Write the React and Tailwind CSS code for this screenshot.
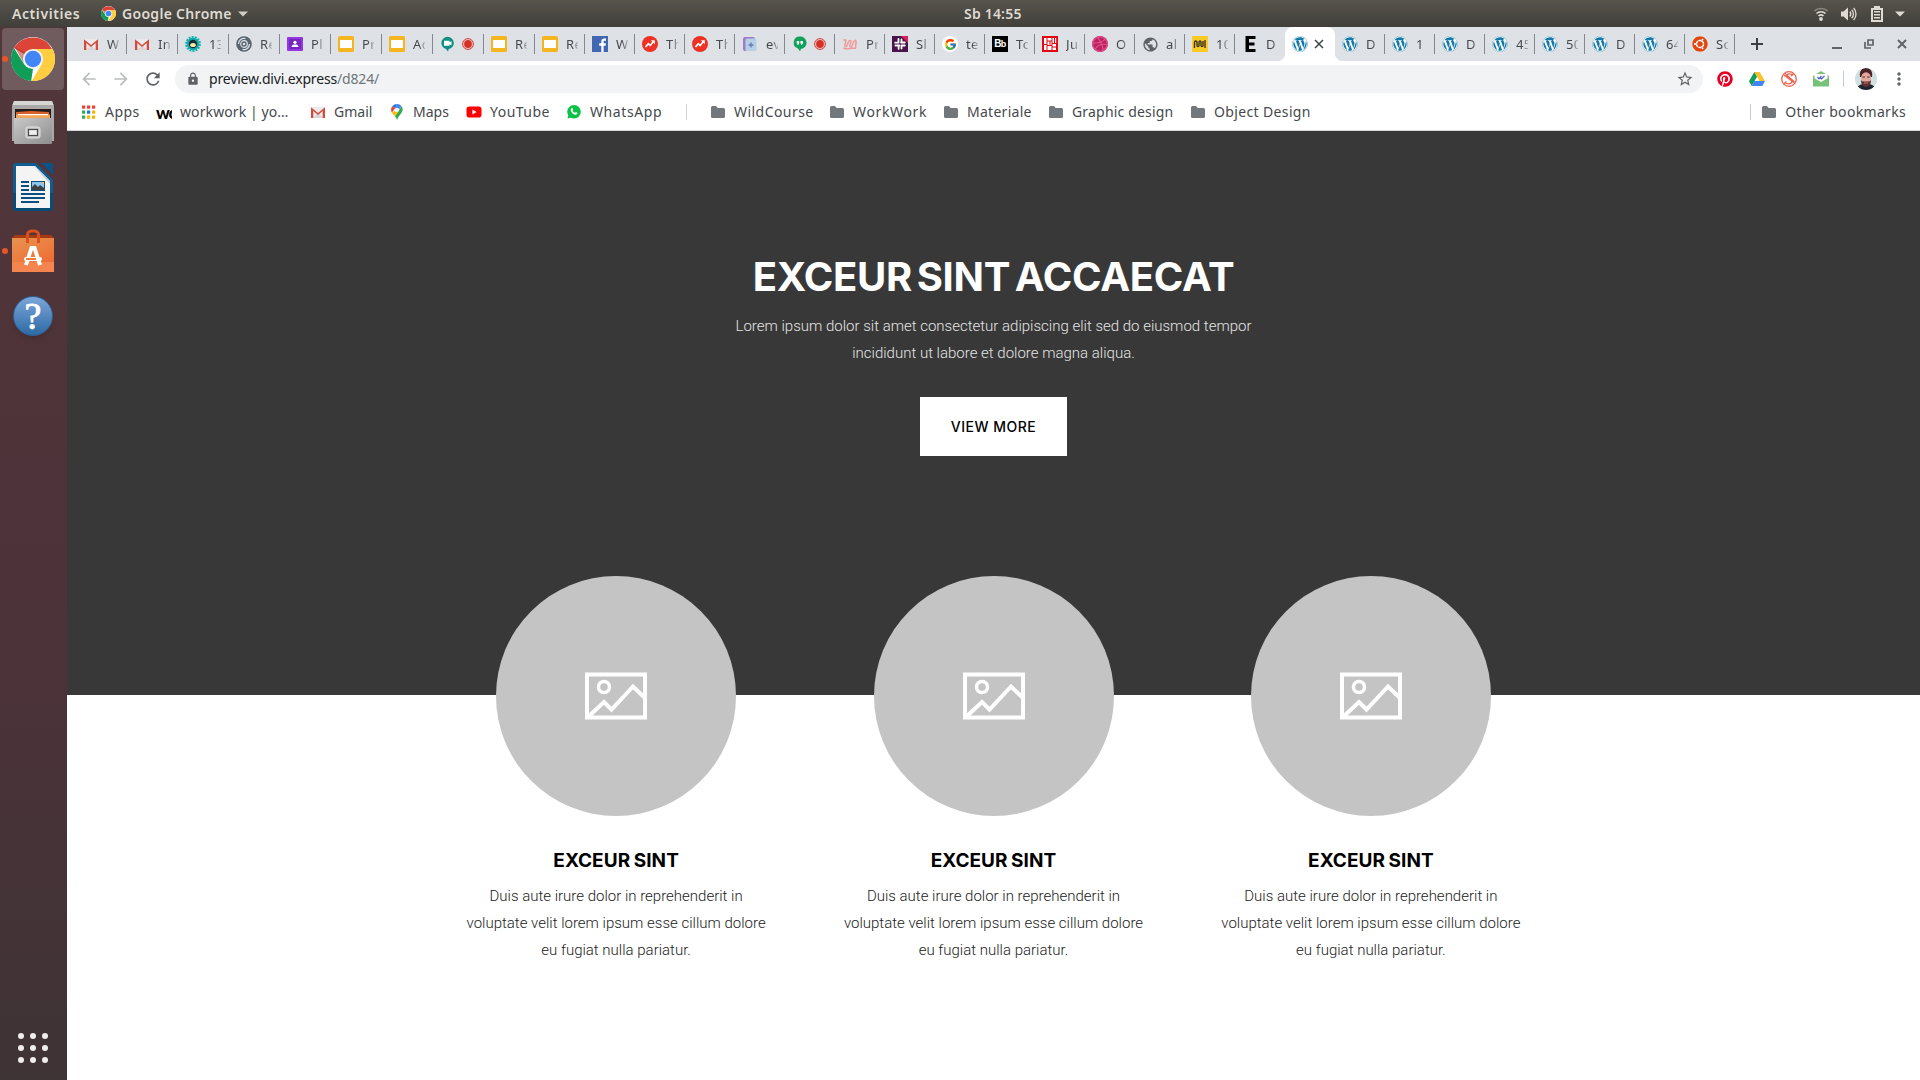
import React from "react";
import { FaWordpress, FaDribbble, FaPinterest, FaUbuntu } from "react-icons/fa";
import { FcGoogle } from "react-icons/fc";
import { MdArrowBack, MdArrowForward, MdRefresh, MdLock, MdStarBorder, MdMoreVert, MdPublic } from "react-icons/md";

const Svg = ({ size = 16, box = "0 0 16 16", className = "", children }) => (
  <svg width={size} height={size} viewBox={box} className={"block shrink-0 " + className}>{children}</svg>
);

const Chrome = ({ size }) => (
  <Svg size={size} box="0 0 48 48">
    <circle cx="24" cy="24" r="24" fill="#fff" />
    <path d="M24 24L3.2 12A24 24 0 0 1 44.8 13H24z" fill="#db4437" />
    <path d="M3.2 12L14.5 30 24 35 22 48A24 24 0 0 1 3.2 12z" fill="#109d58" />
    <path d="M24 13H45.3A24 24 0 0 1 22.5 48L34 29z" fill="#ffcd40" />
    <path d="M4 11L14 29 15 17z" fill="#b33226" opacity=".55" />
    <circle cx="24" cy="24" r="11" fill="#f1f1f1" />
    <circle cx="24" cy="24" r="8.9" fill="#4285f4" />
  </Svg>
);

const Gmail = () => (
  <Svg>
    <path d="M1 3h14v11H1z" fill="#eceaea" />
    <path d="M3 14l5-5 5 5z" fill="#d8d6d6" />
    <path d="M1 14V3.200L8 9l7-5.800V14h-2.300V7L8 10.900 3.300 7v7z" fill="#d54b3d" />
  </Svg>
);
const Gear = () => (
  <Svg>
    <circle cx="8" cy="8" r="6.800" fill="none" stroke="#17b3b3" strokeWidth="2.200" strokeDasharray="2 1.050" />
    <circle cx="8" cy="8" r="6.200" fill="#14a9ab" />
    <circle cx="8" cy="8" r="4.200" fill="#1d2b35" />
    <path d="M5 9.500a3 2.500 0 0 1 6 0l-1.500 1.500h-3z" fill="#f4e9a8" />
  </Svg>
);
const Swirl = () => (
  <Svg>
    <circle cx="8" cy="8" r="7.800" fill="#55646e" />
    <path d="M2.500 8a5.500 5.500 0 0 1 7-5.300M13.500 8a5.500 5.500 0 0 1-7 5.300" fill="none" stroke="#dee1e6" strokeWidth="1.300" />
    <circle cx="8" cy="8" r="3.300" fill="none" stroke="#dee1e6" strokeWidth="1.200" />
    <circle cx="8" cy="8" r="1.300" fill="#dee1e6" />
  </Svg>
);
const Classroom = () => (
  <Svg>
    <rect y="1" width="16" height="14" rx="1" fill="#9334e6" />
    <rect x="2" y="3" width="12" height="10" fill="#7627bb" />
    <circle cx="8" cy="6.300" r="1.600" fill="#fff" />
    <path d="M4.500 11c0-2 2-2.500 3.500-2.500s3.500.5 3.500 2.500z" fill="#fff" />
  </Svg>
);
const Slides = () => (
  <Svg>
    <rect width="16" height="16" rx="1.500" fill="#f5b51e" />
    <rect x="2" y="4" width="12" height="8" fill="#fff" />
  </Svg>
);
const Meet = () => (
  <Svg>
    <path d="M7.500.8a6.200 6.200 0 0 1 1.200 12.300L8 15.500 6 13A6.200 6.200 0 0 1 7.500.8z" fill="#0b8f80" />
    <path d="M4 4.800h5.500v1.400L11.500 5v4.500L9.500 8.300v1.500H4z" fill="#fff" />
  </Svg>
);
const Hangouts = () => (
  <Svg>
    <path d="M7.800.5a6.200 6.200 0 0 1 1.100 12.400L8 15.300 6 12.600A6.200 6.200 0 0 1 7.800.5z" fill="#12a05c" />
    <path d="M4.700 5h2.500v2.300L6.200 9H5.300l.5-1.500H4.700zM8.400 5h2.500v2.300L9.900 9H9l.5-1.500H8.400z" fill="#fff" />
  </Svg>
);
const Facebook = () => (
  <Svg>
    <rect width="16" height="16" fill="#4267b2" />
    <path d="M9.300 16V9.700H7.200V7.300h2.100V5.600c0-2 1.200-3.100 3-3.100.8 0 1.400.1 1.700.1v2.100h-1.200c-1 0-1.200.5-1.200 1.200v1.400h2.300l-.3 2.400h-2V16z" fill="#fff" />
  </Svg>
);
const Trend = () => (
  <Svg>
    <circle cx="8" cy="8" r="8" fill="#ee3124" />
    <path d="M3.500 11l2.800-3.300 1.800 1.800L11.500 5.500" fill="none" stroke="#fff" strokeWidth="1.700" />
    <path d="M8.800 4.300h4v4z" fill="#fff" />
  </Svg>
);
const Cube = () => (
  <Svg>
    <rect x="1" y="1" width="12" height="14" rx="2" fill="#9d7cc4" />
    <rect x="3.500" y="2.500" width="11" height="12.500" rx="1.500" fill="#b5cfe6" />
    <path d="M9 6.500v5M6.500 9h5" stroke="#6f74b5" strokeWidth="1.300" />
  </Svg>
);
const Squiggle = () => (
  <Svg>
    <path d="M1.500 4.500c2-2 3 0 2 2s-1 4 .5 4 1.500-4 3-5.500 2.500 0 1.500 2-1 4 .5 4S10.500 7 12 5.200s2.500-.5 2 1.500-.5 3-.3 5M1.500 12c3 1.500 5 .8 7 .3s3 .5 5.500-.3" fill="none" stroke="#f09a98" strokeWidth="1.500" />
  </Svg>
);
const Slack = () => (
  <Svg>
    <rect width="16" height="16" fill="#481449" />
    <path d="M9 0h7v7z" fill="#d81e5b" />
    <path d="M6.500 3v3.500M9.500 3.500v3M3.200 6.700h3.300M9 6.500h3.800M3.400 9.500h4M9.500 9.500h3.300M6.600 9.500v3.300M9.500 9.500v3" stroke="#fff" strokeWidth="1.800" strokeLinecap="round" />
  </Svg>
);
const Google = () => (
  <span className="flex size-4 shrink-0 items-center justify-center rounded-full bg-white"><FcGoogle size={13} /></span>
);
const Bb = () => (
  <span className="flex size-4 shrink-0 items-center justify-center bg-black font-['Liberation_Sans'] text-[10px] leading-none font-bold tracking-[-0.5px] text-white">B<span className="text-[9px]">b</span></span>
);
const RedGrid = () => (
  <Svg>
    <rect width="16" height="16" fill="#e30613" />
    <path d="M2 2h2.500v6H2zM5.500 2h4v2.500h-4zM5.500 5.500h2V9h-2zM8.500 5.500h1V9h-1zM10.500 2h1.500v5h-1.500zM13 2h1.200v5H13zM2 9h2.500v5H2zM5.500 10h4v4h-4zM10.500 8H14v2.500h-3.500zM10.500 11.500H14V14h-3.500z" fill="#fff" />
  </Svg>
);
const Dribbble = () => (
  <span className="flex size-4 shrink-0 items-center justify-center rounded-full bg-[#b52560]"><FaDribbble size={16} color="#ea4c89" /></span>
);
const Globe = () => <MdPublic size={17} color="#5f6368" className="shrink-0" />;
const Yellow = () => (
  <Svg>
    <rect width="16" height="16" fill="#fccb25" />
    <path d="M2.500 12V6.500c0-2 2.500-2 2.500 0v3c0 1.500 2 1.500 2 0v-3c0-2 2-2 2 0v3c0 1.500 2 1.500 2 0V5M13 4v8" fill="none" stroke="#3a3320" strokeWidth="1.400" />
  </Svg>
);
const BlackE = () => (
  <Svg><path d="M3.500 0h10v3H7v3.500h5.500v3H7V13h6.500v3h-10z" fill="#000" /></Svg>
);
const WP = () => (
  <span className="flex size-4 shrink-0 items-center justify-center rounded-full bg-white"><FaWordpress size={16} color="#1479a8" /></span>
);
const Ubuntu = () => (
  <span className="flex size-4 shrink-0 items-center justify-center rounded-full bg-white"><FaUbuntu size={16} color="#dd4814" /></span>
);

const tabs = [
  [Gmail, "W"], [Gmail, "In"], [Gear, "13"], [Swirl, "Re"], [Classroom, "Pl"], [Slides, "Pr"], [Slides, "Ac"], [Meet, null], [Slides, "Re"],
  [Slides, "Re"], [Facebook, "W"], [Trend, "Th"], [Trend, "Th"], [Cube, "ev"], [Hangouts, null], [Squiggle, "Pr"], [Slack, "Sl"], [Google, "te"], [Bb, "To"],
  [RedGrid, "Ju"], [Dribbble, "O"], [Globe, "al"], [Yellow, "10"], [BlackE, "D"], [WP, "active"], [WP, "D"], [WP, "1"], [WP, "D"], [WP, "45"], [WP, "50"], [WP, "D"], [WP, "64"], [Ubuntu, "So"],
];

function Tab({ icon: Icon, label, index }) {
  if (label === "active") {
    return (
      <div className="relative flex h-full w-[50px] items-center rounded-t-lg bg-white pl-[7px]">
        <span className="absolute bottom-0 -left-2 size-2 bg-[radial-gradient(circle_at_0_0,#dee1e6_8px,#fff_8.5px)]" />
        <span className="absolute -right-2 bottom-0 size-2 bg-[radial-gradient(circle_at_100%_0,#dee1e6_8px,#fff_8.5px)]" />
        <Icon />
        <Svg size={10} box="0 0 10 10" className="ml-[6px]"><path d="M1 1l8 8M9 1L1 9" stroke="#3c4043" strokeWidth="1.500" /></Svg>
      </div>
    );
  }
  return (
    <div className={"flex h-full items-center pl-[7px] " + (index < 9 ? "w-[51px]" : "w-[50px]")}>
      <span className="flex w-4 justify-center"><Icon /></span>
      {label ? (
        <span className="ml-2 w-[12px] overflow-hidden text-[13px] leading-5 tracking-[0.4px] whitespace-nowrap text-[#45494d] [mask-image:linear-gradient(90deg,#000_50%,rgba(0,0,0,.25)_100%)]">{label}</span>
      ) : (
        <Svg size={12} box="0 0 12 12" className="ml-[6px]"><circle cx="6" cy="6" r="5.400" fill="none" stroke="#d93025" strokeWidth="1" /><circle cx="6" cy="6" r="3.900" fill="#d93025" /></Svg>
      )}
      {index !== 23 && <span className="ml-auto h-5 w-px bg-[#85898e]" />}
    </div>
  );
}

const Folder = () => (
  <Svg><path d="M1 3.500a1.500 1.500 0 0 1 1.500-1.500H6l1.600 2H13.500A1.500 1.500 0 0 1 15 5.500v7a1.500 1.500 0 0 1-1.500 1.500h-11A1.500 1.500 0 0 1 1 12.500z" fill="#72777c" /></Svg>
);
const AppsGrid = () => (
  <Svg>
    {["#ea4335", "#ea4335", "#ea4335", "#34a853", "#1a73e8", "#f5b400", "#34a853", "#f5b400", "#f5b400"].map((c, i) => (
      <rect key={i} x={1 + (i % 3) * 5} y={1.5 + Math.floor(i / 3) * 5} width="3.200" height="3.200" fill={c} />
    ))}
  </Svg>
);
const WorkWork = () => (
  <span className="flex h-4 w-4 shrink-0 items-end overflow-hidden font-['Lato'] text-[17px] leading-[15px] font-black tracking-[-1px] text-black">wo</span>
);
const Maps = () => (
  <Svg>
    <path d="M8 0a5.800 5.800 0 0 0-4.500 2.100L6.200 4.400z" fill="#1a73e8" />
    <path d="M3.500 2.100A5.800 5.800 0 0 0 2.800 8.500L6.200 4.400z" fill="#ea4335" />
    <path d="M8 0a5.800 5.800 0 0 1 4.600 2.300L8 7.900 6.200 4.400z" fill="#4285f4" />
    <path d="M12.600 2.300c2 3 .8 5.500-.8 7.500S9 13.500 8 16C7.400 14.300 6.800 13.300 6 12.300z" fill="#34a853" />
    <path d="M2.800 8.500C3.500 9.800 5 11 6 12.300L9.700 7.300A2.200 2.200 0 0 1 6 7z" fill="#fbbc04" />
    <circle cx="8" cy="5.800" r="2.100" fill="#fff" />
  </Svg>
);
const YouTube = () => (
  <Svg><rect x=".5" y="2.500" width="15" height="11" rx="2.800" fill="#f00" /><path d="M6.400 5.600v4.800L10.600 8z" fill="#fff" /></Svg>
);
const Whats = () => (
  <Svg>
    <circle cx="8" cy="7.800" r="6.800" fill="#0ac245" /><path d="M1.500 14.500l1-4 3 3z" fill="#0ac245" />
    <path d="M5.300 4.300c.5-.6 1.200-.4 1.400.2l.4 1c.1.400-.6 1-.4 1.300.5.900 1.200 1.500 2.200 2 .4.200.8-.8 1.200-.6l1.200.6c.5.400 0 1.700-1.500 2-2 .2-5-2.600-5.100-4.500 0-.9.200-1.600.6-2z" fill="#fff" />
  </Svg>
);

const bookmarks = [
  [AppsGrid, "Apps", "w-[75px] tracking-[0.45px]"],
  [WorkWork, "workwork | yo…", "w-[154px] tracking-[0.1px]"],
  [Gmail, "Gmail", "w-[79px]"],
  [Maps, "Maps", "w-[77px]"],
  [YouTube, "YouTube", "w-[100px] tracking-[0.48px]"],
  [Whats, "WhatsApp", "w-[120px] tracking-[0.6px]"],
];
const folders = [
  ["WildCourse", "w-[119px] tracking-[0.45px]"],
  ["WorkWork", "w-[114px] tracking-[0.65px]"],
  ["Materiale", "w-[105px] tracking-[0.28px]"],
  ["Graphic design", "w-[142px] tracking-[0.18px]"],
  ["Object Design", "w-[130px] tracking-[0.36px]"],
];
const Bookmark = ({ icon: Icon, label, cls }) => (
  <div className={"flex items-center gap-2 whitespace-nowrap " + cls}><Icon />{label}</div>
);

function TopBar() {
  return (
    <header className="flex h-[27px] items-center bg-linear-to-b from-[#57544c] to-[#403f3a] px-3 font-['Noto_Sans'] text-[14px] font-semibold text-[#dfdbd2]">
      <div className="flex w-[952px] items-center whitespace-nowrap">
        <span className="w-[89px] tracking-[0.58px]">Activities</span>
        <Chrome size={15} />
        <span className="ml-[6px] tracking-[0.3px]">Google Chrome</span>
        <svg width="10" height="6" viewBox="0 0 10 6" className="ml-[6px]"><path d="M0 .5h10L5 5.500z" fill="#cfccc4" /></svg>
      </div>
      <div className="-mt-px tracking-[0.2px] whitespace-nowrap">Sb 14:55</div>
      <div className="ml-auto flex items-center pr-[3px]">
        <svg width="14" height="14" viewBox="0 0 14 14" fill="none">
          <path d="M.5 4a9.500 9.500 0 0 1 13 0" stroke="#8b887f" strokeWidth="1.600" />
          <path d="M2.500 6.500a6.500 6.500 0 0 1 9 0M4.500 9a3.700 3.700 0 0 1 5 0" stroke="#dfdbd2" strokeWidth="1.600" />
          <circle cx="7" cy="12" r="1.900" fill="#dfdbd2" />
        </svg>
        <svg width="16" height="14" viewBox="0 0 16 14" className="ml-[13px]" fill="none" stroke="#dfdbd2">
          <path d="M0 4.500h2.500L7 .5v13L2.500 9.500H0z" fill="#dfdbd2" stroke="none" />
          <path d="M8.800 4.500a3.800 3.800 0 0 1 0 5" strokeWidth="1.300" /><path d="M10.700 2.700a6.200 6.200 0 0 1 0 8.600M12.700 1a9 9 0 0 1 0 12" strokeWidth="1.300" />
        </svg>
        <svg width="12" height="16" viewBox="0 0 12 16" className="ml-[14px]">
          <path d="M3 0h6v2h3v14H0V2h3z" fill="#dfdbd2" /><path d="M2 4h8v10H2z" fill="#4b4943" /><path d="M3 5h6v1.500H3zM3 8h6v1.500H3zM3 11h6v1.500H3z" fill="#dfdbd2" />
        </svg>
        <svg width="10" height="6" viewBox="0 0 10 6" className="ml-3"><path d="M0 .5h10L5 5.500z" fill="#dfdbd2" /></svg>
      </div>
    </header>
  );
}

const Indicator = () => <span className="absolute left-[2px] size-[6px] rounded-full bg-[#e95420]" />;

function Dock() {
  return (
    <aside className="flex w-[67px] shrink-0 flex-col items-center bg-linear-to-b from-[#51363a] via-[#4c3339] via-60% to-[#3e3335] pr-px">
      <div className="relative mt-px flex h-[62px] w-full items-center justify-center">
        <span className="flex h-full w-[62px] items-center justify-center rounded-[4px] bg-[#705b5f]"><Chrome size={44} /></span>
        <Indicator />
      </div>
      <svg width="42" height="44" viewBox="0 0 42 44" className="mt-[11px]">
        <defs><linearGradient id="cab" x1="0" y1="0" x2="1" y2="1"><stop offset="0" stopColor="#c9c9c9" /><stop offset="1" stopColor="#8d8d8d" /></linearGradient></defs>
        <path d="M2 0h38l2 5v35H0V5z" fill="#a9a9a8" /><path d="M2 0h38l1.500 4H.5z" fill="#d6d6d5" />
        <rect x="3" y="8" width="36" height="10" fill="#231c18" />
        <path d="M4 11l15-1 18 1v7H4z" fill="#d8622c" /><path d="M4 13.500h34V18H4z" fill="#f3a65a" /><path d="M6 13h30v1.200H6z" fill="#fff" />
        <rect x="2" y="17" width="38" height="26" rx="1" fill="url(#cab)" />
        <rect x="14" y="26" width="14" height="11" rx="2" fill="#c4c4c4" stroke="#e2e2e2" strokeWidth="1" /><rect x="16.500" y="28.500" width="9" height="6" fill="#eee" stroke="#4a4a4a" strokeWidth="1.200" />
      </svg>
      <svg width="40" height="48" viewBox="0 0 40 48" className="mt-[18px]">
        <path d="M3 0h20l17 17v28a3 3 0 0 1-3 3H3a3 3 0 0 1-3-3V3a3 3 0 0 1 3-3z" fill="#0f5c92" /><path d="M0 30h40v15a3 3 0 0 1-3 3H3a3 3 0 0 1-3-3z" fill="#0a4a77" />
        <path d="M28 0h10a2 2 0 0 1 2 2v10z" fill="#0b5286" />
        <path d="M3 3h19l15 15v27H3z" fill="#f4f4f4" /><path d="M22 3l15 15v3L21 3z" fill="#c5ccd2" />
        <path d="M8 18h8v2H8zM8 22h8v2H8zM8 26h8v2H8zM8 30h24v2H8zM8 34h24v2H8zM8 38h18v2H8z" fill="#0b4f80" />
        <rect x="18.500" y="18.500" width="13" height="9" fill="#8cc6ee" stroke="#0b4f80" strokeWidth="1" /><path d="M19 27v-3l3-3 3 3 2-2 4 3v2z" fill="#3b4142" /><path d="M28.500 19H31v2.500z" fill="#f4c53c" />
      </svg>
      <div className="relative mt-[18px] flex w-full items-center justify-center">
        <Indicator />
        <svg width="42" height="43" viewBox="0 0 42 43">
          <defs><linearGradient id="bag" x1="0" y1="0" x2=".6" y2="1"><stop offset="0" stopColor="#e79350" /><stop offset="1" stopColor="#ef6a32" /></linearGradient></defs>
          <path d="M0 9l3-3h36l3 3z" fill="#a83a12" /><rect y="9" width="42" height="34" fill="url(#bag)" /><rect y="33" width="42" height="10" fill="#f5854f" />
          <path d="M15.500 14V6a4 4 0 0 1 4-4h3a4 4 0 0 1 4 4v8" fill="none" stroke="#d9501c" strokeWidth="3" />
          <path d="M14 36l5.500-17h3L28 36" fill="none" stroke="#fff" strokeWidth="4" /><rect x="12" y="28" width="18" height="4" rx="2" fill="#fff" /><rect x="14" y="29.200" width="10" height="1.700" fill="#e9642c" />
        </svg>
      </div>
      <div className="mt-6 flex size-10 items-center justify-center rounded-full border border-[#2d6394] bg-linear-to-b from-[#7ba6db] to-[#2c6aa3] font-['Liberation_Serif'] text-[38px] leading-none text-white shadow-md [-webkit-text-stroke:0.8px_#fff]">?</div>
      <div className="mt-auto mb-[17px] grid grid-cols-3 gap-[6px]">
        {Array.from({ length: 9 }, (_, i) => <span key={i} className="size-[6px] rounded-full bg-[#f0eeee]" />)}
      </div>
    </aside>
  );
}

function Browser() {
  return (
    <div className="shrink-0 font-['Noto_Sans']">
      <div className="flex h-[34px] items-center bg-[#dee1e6] pl-[9px]">
        {tabs.map(([icon, label], i) => <Tab key={i} icon={icon} label={label} index={i} />)}
        <Svg size={12} box="0 0 12 12" className="ml-4"><path d="M6 0v12M0 6h12" stroke="#3c4043" strokeWidth="2" /></Svg>
        <div className="mr-[13px] ml-auto flex items-center text-[#5f6368]">
          <Svg size={10} box="0 0 10 10"><path d="M0 9h10" stroke="currentColor" strokeWidth="2" /></Svg>
          <Svg size={10} box="0 0 10 10" className="ml-[22px]"><path d="M4 1h5v5H4zM1 3v6h6" fill="none" stroke="currentColor" strokeWidth="1.700" /></Svg>
          <Svg size={10} box="0 0 10 10" className="ml-[23px]"><path d="M1 1l8 8M9 1L1 9" stroke="currentColor" strokeWidth="2" /></Svg>
        </div>
      </div>
      <div className="flex h-9 items-center bg-white pr-[11px] pl-3">
        <MdArrowBack size={20} color="#babcbe" /><MdArrowForward size={20} color="#babcbe" className="ml-3" /><MdRefresh size={20} color="#5f6368" className="ml-3" />
        <div className="ml-3 flex h-7 w-[1528px] items-center rounded-full bg-[#f1f3f4] pr-[9px] pl-[11px]">
          <MdLock size={14} color="#5f6368" />
          <span className="-mt-[2px] ml-[9px] text-[14px] tracking-[-0.17px] text-[#202124]">preview.divi.express<span className="text-[#70757a]">/d824/</span></span>
          <MdStarBorder size={18} color="#5f6368" className="ml-auto" />
        </div>
        <div className="ml-[14px] flex items-center gap-4">
          <FaPinterest size={16} color="#e60023" />
          <Svg>
            <path d="M5.300 1h5.400L16 10h-5.400z" fill="#fbc02d" /><path d="M5.300 1L8 5.700 2.700 15 0 10.300z" fill="#0f9d58" /><path d="M5.400 10H16l-2.700 5H2.700z" fill="#4285f4" />
          </Svg>
          <Svg>
            <circle cx="8" cy="8" r="7.300" fill="none" stroke="#ee5f4d" strokeWidth="1.300" />
            <path d="M12 4.500C10 2 5.500 2.500 5.800 5.200s5 2.800 5 5.300-4.300 3.500-6.800.8M3 4l10.500 8M4 2.500L13.500 11M2.500 13l3-2.500M12.500 2.500L10 5" fill="none" stroke="#ee5f4d" strokeWidth="1.200" />
          </Svg>
          <Svg>
            <path d="M0 5l8-5 8 5v10H0z" fill="#7cc576" /><path d="M1.500 3h13v6L8 12 1.500 9z" fill="#fff" /><path d="M0 6.500l8 4.500 8-4.500v9H0z" fill="#76c27a" /><path d="M4.500 6l1.500 1.800L8.500 5M7.500 7l1 1L11.500 4.800" fill="none" stroke="#4b57c4" strokeWidth="1.200" />
          </Svg>
        </div>
        <span className="ml-[14px] h-4 w-px bg-[#c6c9cd]" />
        <svg width="22" height="22" viewBox="0 0 22 22" className="ml-[11px] block rounded-full">
          <rect width="22" height="22" fill="#cfe0e2" /><path d="M1 22c1-5 5-6 10-6s9 1 10 6z" fill="#1f2430" />
          <path d="M5 9c-1-6 2-9 6-9s7 3 6 9z" fill="#4a2424" /><ellipse cx="11" cy="10.500" rx="5" ry="6.200" fill="#e3a79c" /><path d="M6 12c1 2 2.500 1.500 5 1.500s4 .5 5-1.500c0 4.500-2 7-5 7s-5-2.500-5-7z" fill="#5a332e" /><path d="M9 15h4" stroke="#c9776f" /><path d="M7.500 9h2.300M12.200 9h2.300" stroke="#3a2020" />
        </svg>
        <MdMoreVert size={20} color="#5f6368" className="ml-auto" />
      </div>
      <div className="flex h-[34px] items-center border-b border-[#d5d7da] bg-white pb-[4px] pl-[14px] text-[14px] text-[#45494d]">
        {bookmarks.map(([icon, label, cls]) => <Bookmark key={label} icon={icon} label={label} cls={cls} />)}
        <span className="mr-[23px] h-4 w-px bg-[#d0d3d6]" />
        {folders.map(([label, cls]) => <Bookmark key={label} icon={Folder} label={label} cls={cls} />)}
        <span className="mr-[10px] ml-auto h-4 w-px bg-[#c6c9cd]" />
        <Bookmark icon={Folder} label="Other bookmarks" cls="mr-[14px] tracking-[0.32px]" />
      </div>
    </div>
  );
}

function Feature() {
  return (
    <article className="flex w-80 flex-col items-center">
      <div className="flex size-60 items-center justify-center rounded-full bg-[#c4c4c4]">
        <svg width="62" height="48" viewBox="0 0 62 48" fill="none" stroke="#fff" strokeWidth="4">
          <rect x="2" y="2.500" width="58" height="43" /><circle cx="19" cy="15" r="5.500" strokeWidth="3.500" /><path d="M3 45l16-15 7.500 7.500L48 14.500 60 26" />
        </svg>
      </div>
      <h2 className="mt-[31px] font-['Inter'] text-[19px] leading-7 font-bold tracking-[0.05px] text-black [word-spacing:-1px]">EXCEUR SINT</h2>
      <p className="mt-2 text-center font-['Roboto'] text-[15px] leading-[27px] font-light text-[#222]">
        Duis aute irure dolor in reprehenderit in<br />voluptate velit lorem ipsum esse cillum dolore<br />eu fugiat nulla pariatur.
      </p>
    </article>
  );
}

export default function App() {
  return (
    <div className="flex h-[1080px] w-[1920px] flex-col overflow-hidden">
      <TopBar />
      <div className="flex min-h-0 flex-1">
        <Dock />
        <main className="flex w-[1853px] flex-col bg-white">
          <Browser />
          <section className="flex h-[564px] shrink-0 flex-col items-center bg-[#383838] pt-[116px] text-center">
            <h1 className="font-['Inter'] text-[40px] leading-[60px] font-bold tracking-[-0.3px] text-white [word-spacing:-4.5px]">EXCEUR SINT ACCAECAT</h1>
            <p className="mt-[6px] font-['Roboto'] text-[15px] leading-[27px] font-light text-[#e4e4e4]">
              Lorem ipsum dolor sit amet consectetur adipiscing elit sed do eiusmod tempor<br />incididunt ut labore et dolore magna aliqua.
            </p>
            <button className="mt-[30px] h-[59px] w-[147px] bg-white pb-px font-['Inter'] text-[14px] font-medium tracking-[0.5px] text-black">VIEW MORE</button>
          </section>
          <section className="-mt-[119px] flex justify-center gap-[57.4px]">
            <Feature /><Feature /><Feature />
          </section>
        </main>
      </div>
    </div>
  );
}
